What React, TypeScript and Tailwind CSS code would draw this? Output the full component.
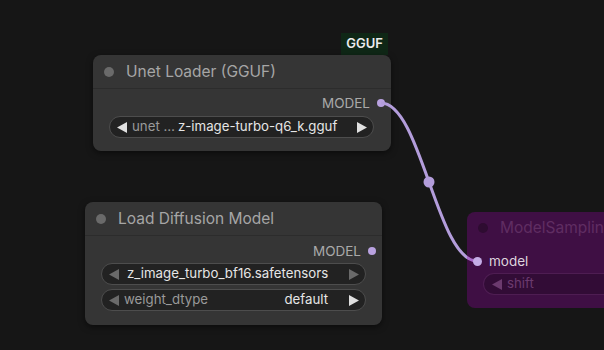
import React from 'react';

function Tri({ dir, className }: { dir: 'l' | 'r'; className: string }) {
  return (
    <svg width="10" height="11" viewBox="0 0 10 11" className={className}>
      <polygon points={dir === 'l' ? '10,0 10,11 0,5.5' : '0,0 0,11 10,5.5'} fill="currentColor" />
    </svg>
  );
}

function Combo({
  label,
  value,
  leftDim,
  rightDim,
  valueLeft,
}: {
  label?: string;
  value: string;
  leftDim?: boolean;
  rightDim?: boolean;
  valueLeft?: boolean;
}) {
  return (
    <div className="flex h-[22px] items-center rounded-full border border-[#4d4d4d] bg-[#222222] pl-[7px] pr-[6px] text-[13.25px]">
      <Tri dir="l" className={leftDim ? 'text-[#6a6a6a]' : 'text-[#e0e0e0]'} />
      {label && <span className="ml-[5px] text-[#9a9a9a]">{label}</span>}
      {valueLeft ? (
        <span className={`${label ? 'ml-[3px]' : 'ml-[8px]'} mr-auto text-[#e6e6e6]`}>{value}</span>
      ) : (
        <span className="ml-auto mr-[21px] text-[#e6e6e6]">{value}</span>
      )}
      <Tri dir="r" className={rightDim ? 'text-[#6a6a6a]' : 'text-[#e0e0e0]'} />
    </div>
  );
}

function NodeTitle({ title }: { title: string }) {
  return (
    <div className="flex h-[34px] items-center border-b border-[#2c2c2c] pl-[11px]">
      <div className="h-[10px] w-[10px] rounded-full bg-[#6a6a6a]" />
      <span className="ml-[12px] text-[15.5px] text-[#a6a6a6]">{title}</span>
    </div>
  );
}

function OutputSlot() {
  return (
    <div className="flex h-[20px] items-center justify-end pr-[6px]">
      <span className="text-[13.5px] text-[#a9a9a9]">MODEL</span>
      <div className="ml-[7px] h-[8px] w-[8px] rounded-full bg-[#b9a2e0]" />
    </div>
  );
}

export default function App() {
  return (
    <div className="relative h-[350px] w-[604px] overflow-hidden bg-[#161616] font-[Inter,sans-serif]">
      {/* GGUF badge */}
      <div className="absolute left-[341px] top-[33px] flex h-[22px] w-[47px] items-center justify-center bg-[#0f2716] text-[13px] font-semibold text-[#ececec]">
        GGUF
      </div>

      {/* Unet Loader */}
      <div className="absolute left-[93px] top-[55px] h-[96px] w-[298px] rounded-[8px] bg-[#353535] shadow-[0_2px_6px_rgba(0,0,0,0.5)]">
        <NodeTitle title="Unet Loader (GGUF)" />
        <div className="pt-[4px]">
          <OutputSlot />
          <div className="ml-[16px] mr-[17px] mt-[3px]">
            <Combo label="unet …" value="z-image-turbo-q6_k.gguf" valueLeft />
          </div>
        </div>
      </div>

      {/* Load Diffusion Model */}
      <div className="absolute left-[85px] top-[202px] h-[123px] w-[297px] rounded-[8px] bg-[#353535] shadow-[0_2px_6px_rgba(0,0,0,0.5)]">
        <NodeTitle title="Load Diffusion Model" />
        <div className="pt-[5px]">
          <OutputSlot />
          <div className="ml-[16px] mr-[16px] mt-[2px] flex flex-col gap-[4px]">
            <Combo value="z_image_turbo_bf16.safetensors" leftDim rightDim valueLeft />
            <Combo label="weight_dtype" value="default" leftDim />
          </div>
        </div>
      </div>

      {/* link */}
      <svg className="absolute left-0 top-0" width="604" height="350">
        <path d="M381 103 C 421 103, 437 261, 477 261" stroke="#b39ddb" strokeWidth="3" fill="none" />
        <circle cx="429" cy="182" r="5.5" fill="#b39ddb" />
      </svg>

      {/* ModelSampling (bypassed) */}
      <div className="absolute left-[467px] top-[212px] h-[96px] w-[220px] rounded-[8px] bg-[#9000a0]/[0.33]">
        <div className="flex h-[32px] items-center pl-[11px]">
          <div className="h-[10px] w-[10px] rounded-full bg-[#2e0c31]" />
          <span className="ml-[12px] whitespace-nowrap text-[15.5px] text-[#5f2d62]">ModelSamplingAuraFlow</span>
        </div>
        <div className="mt-[7px] flex h-[20px] items-center pl-[6px]">
          <div className="h-[9px] w-[9px] rounded-full bg-[#c4ade6]" />
          <span className="ml-[7px] text-[13.5px] text-[#ddd4dd]">model</span>
        </div>
        <div className="ml-[16px] mt-[2px] flex h-[22px] items-center rounded-l-full border border-r-0 border-[#4e1d52] bg-black/20 pl-[8px] text-[13.25px]">
          <Tri dir="l" className="text-[#6b3a6e]" />
          <span className="ml-[5px] text-[#6b3a6e]">shift</span>
        </div>
      </div>
    </div>
  );
}
